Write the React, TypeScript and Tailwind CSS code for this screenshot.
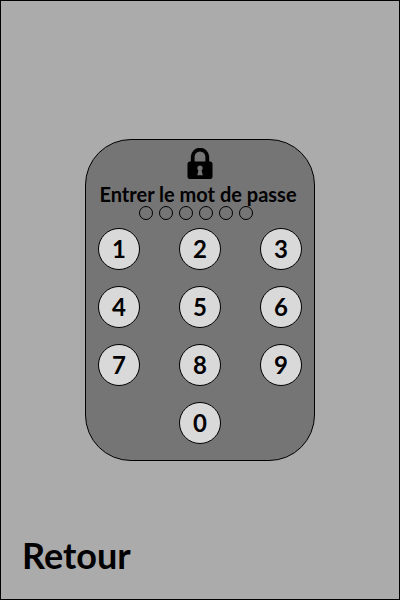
import { useState } from "react";

const digits = ["1", "2", "3", "4", "5", "6", "7", "8", "9", "0"];
const codeLength = 6;

function LockIcon() {
  return (
    <svg viewBox="0 0 26 32" className="h-8 w-[26px]" aria-hidden="true">
      <path
        d="M5.7 14V8.7a7.3 7 0 0 1 14.6 0V14"
        fill="none"
        stroke="#000"
        strokeWidth="3.8"
      />
      <path
        fillRule="evenodd"
        d="M3 13.6h20a2.5 2.5 0 0 1 2.5 2.5v12.4a2.5 2.5 0 0 1-2.5 2.5H3a2.5 2.5 0 0 1-2.5-2.5V16.1A2.5 2.5 0 0 1 3 13.6ZM13 17.5a2.7 2.7 0 0 0-1.6 4.9L10.2 27.2h5.6l-1.2-4.8a2.7 2.7 0 0 0-1.6-4.9Z"
        fill="#000"
      />
    </svg>
  );
}

export default function App() {
  const [code, setCode] = useState("");

  const press = (digit: string) =>
    setCode((current) => (current.length < codeLength ? current + digit : current));

  return (
    <main className="flex min-h-screen flex-col border border-black bg-[#ababab] font-['Lato',sans-serif] font-bold text-black">
      <section
        aria-labelledby="prompt"
        className="mx-auto mt-[138px] flex w-[230px] flex-col items-center rounded-[46px] border border-black bg-[#757575] px-3 pt-2 pb-4"
      >
        <LockIcon />
        <div className="mt-0.5 mr-1 flex flex-col items-center">
          <h1 id="prompt" className="text-xl leading-6 whitespace-nowrap">
            Entrer le mot de passe
          </h1>
          <div className="mr-1 flex gap-[6px]">
            {Array.from({ length: codeLength }, (_, i) => (
              <span
                key={i}
                className={`size-[14px] rounded-full border border-black ${i < code.length ? "bg-black" : ""}`}
              />
            ))}
          </div>
        </div>
        <div className="mt-2 grid w-full grid-cols-[repeat(3,42px)] justify-between gap-y-4">
          {digits.map((digit) => (
            <button
              key={digit}
              type="button"
              onClick={() => press(digit)}
              className="size-[42px] rounded-full border border-black bg-[#d9d9d9] pb-0.5 text-2xl leading-10 last:col-start-2"
            >
              {digit}
            </button>
          ))}
        </div>
      </section>
      <button
        type="button"
        onClick={() => setCode("")}
        className="mt-auto mb-[22px] ml-[21px] self-start text-4xl leading-11"
      >
        Retour
      </button>
    </main>
  );
}
